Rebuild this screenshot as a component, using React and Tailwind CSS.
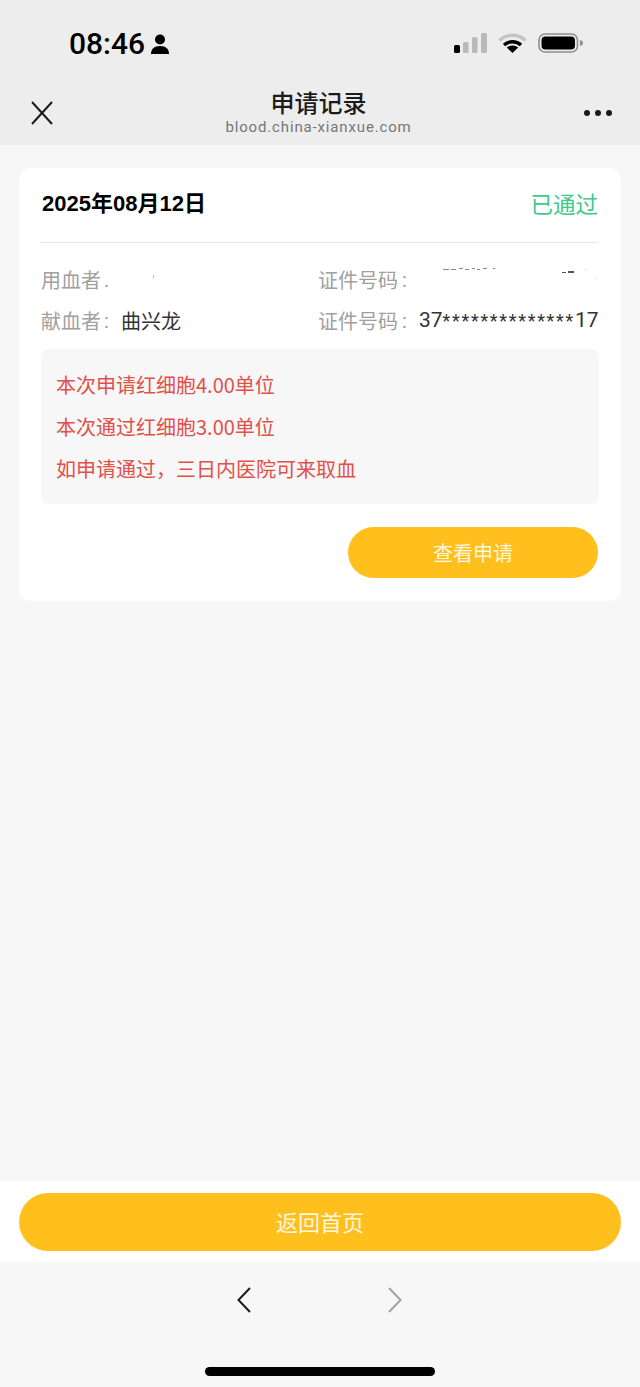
import React from 'react';

const CJK = 'font-["Noto_Sans_CJK_SC","Noto_Sans",sans-serif]';

function StatusBar() {
  return (
    <div className="flex h-[87px] items-start justify-between pl-[69px] pr-[56px] pt-[24px]">
      <div className="flex items-center gap-[6px]">
        <span className='font-["Roboto",sans-serif] mt-[1px] text-[30px] leading-[38px] font-medium text-black'>08:46</span>
        <svg width="18" height="20" viewBox="0 0 18 20" className="mt-[1px]">
          <circle cx="9" cy="5.500" r="5" fill="#000" />
          <path d="M0 20c0-5 3-8 9-8s9 3 9 8z" fill="#000" />
        </svg>
      </div>
      <div className="flex items-center pt-[9px]">
        <svg width="33" height="20" viewBox="0 0 33 20">
          <rect x="0" y="12" width="6" height="8" rx="1.500" fill="#000" />
          <rect x="9" y="9" width="5.500" height="11" rx="1.500" fill="#b9b9b9" />
          <rect x="18" y="4" width="5.500" height="16" rx="1.500" fill="#b9b9b9" />
          <rect x="27" y="0" width="6" height="20" rx="1.500" fill="#b9b9b9" />
        </svg>
        <svg width="29" height="20" viewBox="0 0 29 20" className="ml-[11px]">
          <path d="M1.500 7.500C8.500 0.500 20.500 0.500 27.500 7.500" fill="none" stroke="#c4c4c4" strokeWidth="3.400" />
          <path d="M6 12C10.800 7.600 18.200 7.600 23 12" fill="none" stroke="#000" strokeWidth="3.400" />
          <path d="M8.800 14.600L14.500 20l5.700-5.400c-3.200-2.800-8.200-2.800-11.400 0z" fill="#000" />
        </svg>
        <svg width="46" height="20" viewBox="0 0 46 20" className="ml-[11px]">
          <rect x="1" y="1" width="38.500" height="18" rx="6" fill="none" stroke="#8e8e8e" strokeWidth="1.600" />
          <rect x="3.500" y="3.500" width="33.500" height="13" rx="4" fill="#000" />
          <path d="M42 7c2 .4 3 1.500 3 3s-1 2.600-3 3z" fill="#8e8e8e" />
        </svg>
      </div>
    </div>
  );
}

function TitleBar() {
  return (
    <div className="flex h-[58px] items-start justify-between pl-[31px] pr-[28px]">
      <svg width="22" height="24" viewBox="0 0 22 24" className="mt-[14px]">
        <path d="M1 1L21 23M21 1L1 23" stroke="#1a1a1a" strokeWidth="2" />
      </svg>
      <div className="mt-[-2px] flex flex-col items-center">
        <span className={`${CJK} text-[24px] leading-[34px] font-medium text-[#1b1b1b]`}>申请记录</span>
        <span className='font-["Roboto",sans-serif] mt-[-2px] text-[15px] leading-[20px] tracking-[0.85px] text-[#777777]'>blood.china-xianxue.com</span>
      </div>
      <div className="mt-[23px] flex gap-[5px]">
        <span className="h-[6px] w-[6px] rounded-full bg-[#1a1a1a]" />
        <span className="h-[6px] w-[6px] rounded-full bg-[#1a1a1a]" />
        <span className="h-[6px] w-[6px] rounded-full bg-[#1a1a1a]" />
      </div>
    </div>
  );
}

// 打码留下的零星噪点
function Specks() {
  return (
    <svg width="178" height="20" viewBox="0 0 178 20" className="mt-[-6px] shrink-0">
      <path d="M24 2h6v1h-6zM32 2h5v1h-5zM40 1h4v1h-4zM46 2h4v1h-4zM53 1h3v1h-3zM58 2h3v1h-3zM64 1h4v1h-4zM74 1h2v1h-2z" fill="#888" />
      <path d="M143 5h4v1h-4zM149 4h6v2h-6z" fill="#555" />
      <path d="M166 2h1v1h-1zM176 11h1v1h-1z" fill="#ccc" />
    </svg>
  );
}

function InfoRow({ label, value, mark, idLabel, idValue }) {
  return (
    <div className={`${CJK} flex h-[41px] items-center text-[20px] whitespace-nowrap`}>
      <div className="flex w-[277px] shrink-0 items-center">
        <span className="text-[#a0a0a0]">{label}</span>
        <span className='font-["Roboto",sans-serif] w-[20px] pl-[3px] text-[#a0a0a0]'>{mark}</span>
        {value ? (
          <span className="text-[#333333]">{value}</span>
        ) : (
          <span className="ml-[32px] mt-[-6px] h-[3px] w-[1px] bg-[#bbbbbb]" />
        )}
      </div>
      <div className="flex flex-1 items-center">
        <span className="shrink-0 text-[#a0a0a0]">{idLabel}</span>
        <span className='font-["Roboto",sans-serif] w-[21px] shrink-0 pl-[4px] text-[#a0a0a0]'>:</span>
        {idValue ? (
          <span className='font-["Roboto",sans-serif] text-[21px] text-[#333333]'>
            37<span className="text-[18px] tracking-[1.7px]">**************</span>17
          </span>
        ) : (
          <Specks />
        )}
      </div>
    </div>
  );
}

export default function App() {
  return (
    <div className={`${CJK} flex h-[1387px] w-[640px] flex-col overflow-hidden bg-[#f7f7f7]`}>
      <header className="h-[145px] bg-[#ededed]">
        <StatusBar />
        <TitleBar />
      </header>

      <main className="flex-1 px-[19px] pt-[23px]">
        <div className="rounded-[12px] bg-white px-[22px] pb-[23px]">
          <div className="mr-[1px] flex h-[75px] items-start justify-between border-b border-[#e6e6e6]">
            <span className='font-["Liberation_Sans","Noto_Sans_CJK_SC",sans-serif] ml-[1px] mt-[21px] text-[22px] leading-[30px] font-bold text-black'>2025年08月12日</span>
            <span className="mt-[19px] text-[22.500px] leading-[32px] text-[#3fc98b]">已通过</span>
          </div>
          <div className="pt-[16px]">
            <InfoRow label="用血者" mark="." idLabel="证件号码" />
            <InfoRow label="献血者" mark=":" value="曲兴龙" idLabel="证件号码" idValue="37" />
          </div>
          <div className="mt-[8px] h-[155px] rounded-[8px] bg-[#f7f7f7] px-[15px] py-[15px] text-[20px] leading-[42px] text-[#e2504a]">
            <p>本次申请红细胞4.00单位</p>
            <p>本次通过红细胞3.00单位</p>
            <p>如申请通过，三日内医院可来取血</p>
          </div>
          <div className="mt-[23px] flex justify-end pr-[1px]">
            <button className="h-[51px] w-[250px] rounded-full bg-[#ffc01e] text-[20px] text-[#fff7e0]">查看申请</button>
          </div>
        </div>
      </main>

      <div className="flex h-[81px] items-center bg-white px-[19px]">
        <button className="h-[58px] w-full rounded-full bg-[#ffc01e] text-[22px] text-[#fff7e0]">返回首页</button>
      </div>

      <footer className="flex h-[125px] flex-col items-center">
        <div className="mt-[25px] flex gap-[137px] pr-[1px]">
          <svg width="14" height="26" viewBox="0 0 14 26">
            <path d="M13 1L1.500 13L13 25" fill="none" stroke="#1a1a1a" strokeWidth="2" />
          </svg>
          <svg width="14" height="26" viewBox="0 0 14 26">
            <path d="M1 1L12.500 13L1 25" fill="none" stroke="#a3a3a3" strokeWidth="2" />
          </svg>
        </div>
        <div className="mt-[54px] h-[9px] w-[230px] rounded-full bg-black" />
      </footer>
    </div>
  );
}
